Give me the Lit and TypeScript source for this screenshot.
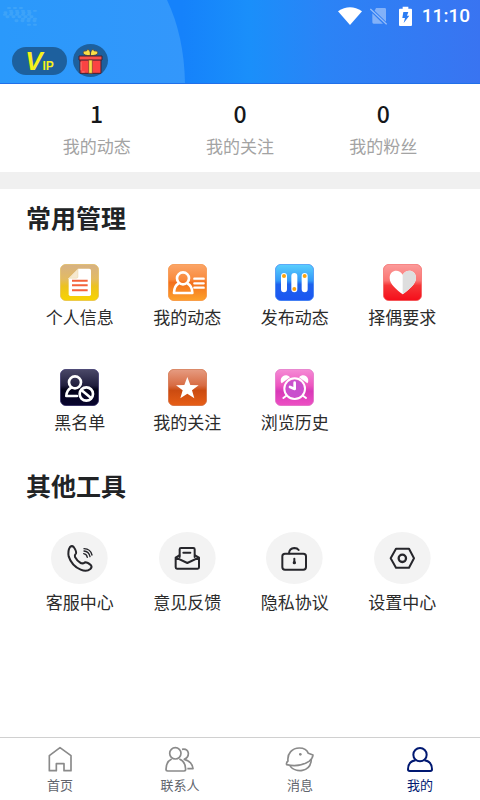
import { LitElement, html, css, svg, TemplateResult } from "lit";
import { customElement, property } from "lit/decorators.js";
import { classMap } from "lit/directives/class-map.js";

interface Item {
  label: string;
  icon: TemplateResult;
}

const tile = (id: string, stops: [number, string][], rim: string, art: TemplateResult) => html`
  <svg class="tile" viewBox="0 0 117 111" aria-hidden="true">
    <defs>
      <linearGradient id=${id} x1="0" y1="0" x2="0" y2="1">
        ${stops.map(([o, c]) => svg`<stop offset=${o} stop-color=${c} />`)}
      </linearGradient>
    </defs>
    <rect x="1" y="1" width="115" height="109" rx="17" fill="url(#${id})" stroke=${rim} stroke-width="2" />
    ${art}
  </svg>`;

const round = (art: TemplateResult) => html`
  <svg class="round" viewBox="0 0 171 156" aria-hidden="true">
    <ellipse cx="85" cy="78" rx="85" ry="78" fill="#f3f3f3" />
    <g fill="none" stroke="#26262b" stroke-width="6" stroke-linejoin="round" stroke-linecap="round">${art}</g>
  </svg>`;

const nav = (art: TemplateResult) => html`
  <svg class="nav" viewBox="0 0 90 84" fill="none" stroke="currentColor" stroke-width="5" stroke-linejoin="round" aria-hidden="true">${art}</svg>`;

const manage: Item[] = [
  {
    label: "个人信息",
    icon: tile("g1", [[0, "#d6b184"], [0.4, "#e3bb62"], [0.6, "#ecc21f"], [1, "#f8d400"]], "#e2bb55", svg`
      <path d="M54 14H88Q93 14 93 19V91Q93 96 88 96H31Q26 96 26 91V43Z" fill="#fff" />
      <path d="M54 15V38Q54 43 49 43H27Z" fill="#f6e9cf" stroke="#e3c78c" stroke-width="1" />
      <path d="M36 50H83M36 64H83M36 79H83" stroke="#f4623a" stroke-width="6" />`),
  },
  {
    label: "我的动态",
    icon: tile("g2", [[0, "#fba568"], [0.42, "#f98a3c"], [0.5, "#f3701d"], [1, "#fda22b"]], "#f58b38", svg`
      <g fill="none" stroke="#fff" stroke-width="8" stroke-linejoin="round">
        <circle cx="45" cy="43" r="18" />
        <path d="M32 58Q18 66 18 87H73Q73 66 58 58" />
      </g>
      <path d="M79 44H107M79 58H107M79 71H107" stroke="#fff" stroke-width="7" stroke-linecap="round" />`),
  },
  {
    label: "发布动态",
    icon: tile("g3", [[0, "#5bd0fd"], [0.45, "#3299f8"], [0.55, "#1d62ee"], [1, "#1c55f1"]], "#3b82f2", svg`
      <path d="M27 36V76M58 36V76M89 36V76" stroke="#fff" stroke-width="18" stroke-linecap="round" />
      <g fill="#fba40f"><circle cx="27" cy="36" r="6" /><circle cx="58" cy="75" r="6" /><circle cx="89" cy="36" r="6" /></g>`),
  },
  {
    label: "择偶要求",
    icon: tile("g4", [[0, "#fb9c9b"], [0.45, "#fb7472"], [0.58, "#f53637"], [1, "#f50d1a"]], "#f2605f", svg`
      <path d="M59 91C43 78 20 62 20 42C20 18 48 13 59 32C70 13 99 18 99 42C99 62 75 78 59 91Z" fill="#fff" />
      <path d="M59 91V32C70 13 99 18 99 42C99 62 75 78 59 91Z" fill="#dedede" />`),
  },
  {
    label: "黑名单",
    icon: tile("g5", [[0, "#4b4968"], [0.45, "#201e3d"], [0.55, "#04031a"], [1, "#09052f"]], "#302b68", svg`
      <g fill="none" stroke="#fff" stroke-width="8" stroke-linejoin="round" stroke-linecap="round">
        <circle cx="45" cy="40" r="18" />
        <path d="M34 56Q20 63 19 81H51" />
        <circle cx="79" cy="75" r="20" />
        <path d="M65 64L93 87" />
      </g>`),
  },
  {
    label: "我的关注",
    icon: tile("g6", [[0, "#e69c82"], [0.45, "#d76b42"], [0.58, "#cb4b11"], [1, "#e75e16"]], "#cf683d", svg`
      <path d="M58 24L67 48L92 49L72 64L79 88L58 74L37 88L44 64L24 49L49 48Z" fill="#fff" />`),
  },
  {
    label: "浏览历史",
    icon: tile("g7", [[0, "#f58bd5"], [0.45, "#ed56c0"], [0.6, "#d839b8"], [1, "#ed4fc3"]], "#dc6fc3", svg`
      <circle cx="59" cy="59" r="27" fill="#c950cd" />
      <g fill="#fff">
        <path d="M20 43A14 14 0 0 1 45 25Z" /><path d="M97 43A14 14 0 0 0 72 25Z" />
      </g>
      <g fill="none" stroke="#fff" stroke-width="6" stroke-linecap="round" stroke-linejoin="round">
        <circle cx="59" cy="59" r="31" />
        <path d="M59 41V60L45 54" stroke-width="8" />
        <path d="M34 80L25 87M84 80L93 87" />
      </g>`),
  },
];

const tools: Item[] = [
  {
    label: "客服中心",
    icon: round(svg`
      <path d="M57 45Q63 40 68 45Q77 58 75 64Q70 69 72 75Q79 88 89 93Q95 96 102 91Q109 90 120 100Q124 105 118 111Q107 121 89 113Q62 101 53 73Q50 56 57 45Z" />
      <path d="M98 65Q107 66 109 76M99 57Q114 58 117 74M99 50Q119 51 123 69" stroke-width="4" />`),
  },
  {
    label: "意见反馈",
    icon: round(svg`
      <path d="M62 75V52Q62 48 66 48H103Q107 48 107 52V75M73 62H94" />
      <path d="M61 70L50 77V106Q50 110 54 110H116Q120 110 120 106V77L108 70M51 77L85 93L119 77" />`),
  },
  {
    label: "隐私协议",
    icon: round(svg`
      <rect x="49" y="65" width="71" height="48" rx="8" />
      <path d="M69 64Q70 49 85 48Q94 48 98 54" />
      <path d="M85 80V92" /><circle cx="85" cy="92" r="2" />`),
  },
  {
    label: "设置中心",
    icon: round(svg`
      <path d="M66 50H105L120 79L105 107H66L50 79Z" />
      <circle cx="85" cy="79" r="11" stroke-width="7" />`),
  },
];

const tabs: Item[] = [
  { label: "首页", icon: nav(svg`<path d="M13 32L45 8L78 32V77H57V56H34V77H13Z" />`) },
  {
    label: "联系人",
    icon: nav(svg`
      <circle cx="31" cy="25" r="17" />
      <path d="M20 42Q3 50 3 73Q3 78 8 78H57Q62 78 62 73Q62 50 43 42" />
      <path d="M51 13Q67 10 70 24Q71 37 58 43Q82 50 84 71H67" />`),
  },
  {
    label: "消息",
    icon: nav(svg`
      <path d="M9 48C6 25 22 9 43 9C59 9 67 17 70 25L84 30Q83 41 72 49C50 63 25 64 5 59Q3 53 9 48Z" />
      <path d="M15 63C30 83 77 85 79 42" />
      <circle cx="46" cy="28" r="4" fill="currentColor" stroke="none" />`),
  },
  {
    label: "我的",
    icon: nav(svg`
      <circle cx="45" cy="29" r="20" stroke-width="6" />
      <path d="M32 46Q9 49 9 73Q9 78 14 78H76Q81 78 81 73Q81 49 58 46" stroke-width="6" />`),
  },
];

const stats = [
  { label: "我的动态", value: 1 },
  { label: "我的关注", value: 0 },
  { label: "我的粉丝", value: 0 },
];

@customElement("status-bar")
class StatusBar extends LitElement {
  static styles = css`
    :host { display: flex; justify-content: flex-end; align-items: center; height: 32px; padding-right: 10px; color: #fff; }
    .wifi { width: 24px; height: 18px; margin-right: 8px; }
    .sim { width: 17px; height: 18px; margin-right: 12px; }
    .battery { width: 13px; height: 20px; margin-right: 10px; }
    .time { font: 500 19px/24px Roboto, sans-serif; }
  `;
  render() {
    return html`
      <svg class="wifi" viewBox="0 0 72 54" aria-hidden="true"><path d="M0 13Q36-12 72 13L36 54Z" fill="#fff" /></svg>
      <svg class="sim" viewBox="0 0 51 54" aria-hidden="true">
        <path d="M18 3H44Q48 3 48 7V44L14 11ZM7 19L39 50H11Q7 50 7 46Z" fill="#fff" opacity=".4" />
        <path d="M1 6L50 52" stroke="#fff" stroke-width="4" opacity=".5" />
      </svg>
      <svg class="battery" viewBox="0 0 39 60" aria-hidden="true">
        <path d="M11 2H28V8H36Q39 8 39 11V57Q39 60 36 60H3Q0 60 0 57V11Q0 8 3 8H11Z" fill="#fff" />
        <path d="M13 18H28L24 29H31L14 51L18 36H10Z" fill="#2a7cf3" />
      </svg>
      <span class="time">11:10</span>`;
  }
}

@customElement("icon-grid")
class IconGrid extends LitElement {
  @property({ attribute: false }) items: Item[] = [];
  @property() heading = "";
  static styles = css`
    :host { display: block; padding: 0 24px 0 26px; }
    .heading { margin: 0; font-size: 25px; line-height: 36px; font-weight: 700; color: #212325; }
    .grid { display: grid; grid-template-columns: repeat(4, 1fr); row-gap: 40px; padding-top: 29px; }
    .item { display: flex; flex-direction: column; align-items: center; gap: 4px; padding: 0; border: 0; background: none; font: inherit; font-size: 17px; line-height: 24px; color: #2b2b2b; cursor: pointer; white-space: nowrap; }
    .tile { display: block; width: 39px; height: 37px; }
    .round { display: block; width: 57px; height: 52px; margin-bottom: 2px; }
  `;
  render() {
    return html`
      <h2 class="heading">${this.heading}</h2>
      <div class="grid">
        ${this.items.map((i) => html`<button class="item" type="button">${i.icon}<span>${i.label}</span></button>`)}
      </div>`;
  }
}

@customElement("app-root")
class AppRoot extends LitElement {
  static styles = css`
    :host { display: flex; flex-direction: column; min-height: 100vh; background: #fff; font-family: "Noto Sans CJK SC", sans-serif; }
    .top { position: relative; box-sizing: border-box; height: 84px; border-bottom: 1px solid #2170e9; background: linear-gradient(90deg, #1582fb 38%, #1a8ffa 52%, #2b83f6 68%, #3974f1 100%); }
    .backdrop { position: absolute; top: 0; left: 0; width: 186px; height: 100%; }
    .status, .chips { position: relative; }
    .chips { display: flex; align-items: center; gap: 6px; padding: 12px 12px 0; }
    .vip, .gift { display: flex; align-items: center; justify-content: center; padding: 0; border: 0; background: #1d609e; cursor: pointer; }
    .vip { align-items: baseline; width: 55px; height: 28px; border-radius: 14px; color: #f6f01c; font-family: "Liberation Sans", sans-serif; font-weight: 700; }
    .vip-v { font-size: 26px; line-height: 28px; font-style: italic; }
    .vip-ip { font-size: 12px; line-height: 12px; }
    .gift { width: 35px; height: 33px; border-radius: 50%; }
    .gift-art { width: 25px; height: 26px; }
    .stats { display: grid; grid-template-columns: repeat(3, 1fr); margin: 0; padding: 13px 25px 12px; text-align: center; border-bottom: 17px solid #f0f0f0; }
    .stat { display: flex; flex-direction: column-reverse; gap: 3px; }
    .value { margin: 0; font-size: 23px; line-height: 32px; font-weight: 500; color: #15171a; }
    .label { font-size: 17px; line-height: 28px; font-weight: 400; color: #a3a3a3; }
    .content { display: flex; flex-direction: column; flex: 1; gap: 33px; padding: 10px 0 24px; }
    .tabs { display: grid; grid-template-columns: repeat(4, 1fr); border-top: 1px solid #d0d0d0; padding: 7px 0 5px; }
    .tab { display: flex; flex-direction: column; align-items: center; gap: 2px; font-size: 13px; line-height: 20px; color: #61656d; text-decoration: none; }
    .nav { display: block; width: 30px; height: 28px; color: #8a8a8a; }
    .active, .active .nav { color: #001871; }
  `;
  render() {
    return html`
      <header class="top">
        <svg class="backdrop" viewBox="0 0 186 84" preserveAspectRatio="none" aria-hidden="true">
          <defs>
            <linearGradient id="sky" x1="0" x2="1"><stop offset="0" stop-color="#2a99fb" /><stop offset="1" stop-color="#3397fb" /></linearGradient>
          </defs>
          <path d="M0 0H167Q184 36 185 84H0Z" fill="url(#sky)" />
          <g fill="none" stroke="#72c1f6" stroke-linecap="round" opacity=".25">
            <path d="M5 13H32M7 17H36M16 21H38" stroke-width="3" stroke-dasharray="1 5" />
            <path d="M8 8H24M4 15H30M22 19H40M28 25H36M10 11H38" stroke-width="2" stroke-dasharray="2 4" />
          </g>
        </svg>
        <status-bar class="status"></status-bar>
        <div class="chips">
          <button class="vip" type="button" aria-label="VIP"><span class="vip-v">V</span><span class="vip-ip">IP</span></button>
          <button class="gift" type="button" aria-label="礼物">
            <svg class="gift-art" viewBox="0 0 75 78" aria-hidden="true">
              <path d="M37 23Q18 23 15 15Q16 6 25 9Q29 0 35 8Q38 14 37 23ZM37 23Q56 23 60 15Q58 6 49 9Q46 0 40 8Q37 14 37 23Z" fill="#f9df47" stroke="#3b3142" stroke-width="2" />
              <path d="M6 35H69V76H6Z" fill="#fa4343" stroke="#402232" stroke-width="3" />
              <path d="M3 24H72V36H3Z" fill="#fb5049" stroke="#402232" stroke-width="3" />
              <path d="M32 36H43V76H32Z" fill="#f9df47" stroke="#7a3531" stroke-width="2" />
              <path d="M9 42V67M12 72H20" stroke="#ff9b8b" stroke-width="2" />
            </svg>
          </button>
        </div>
      </header>
      <dl class="stats">
        ${stats.map((s) => html`<div class="stat"><dt class="label">${s.label}</dt><dd class="value">${s.value}</dd></div>`)}
      </dl>
      <main class="content">
        <icon-grid heading="常用管理" .items=${manage}></icon-grid>
        <icon-grid heading="其他工具" .items=${tools}></icon-grid>
      </main>
      <nav class="tabs">
        ${tabs.map((t, i) => html`<a class=${classMap({ tab: true, active: i === 3 })} href="#">${t.icon}<span>${t.label}</span></a>`)}
      </nav>`;
  }
}
